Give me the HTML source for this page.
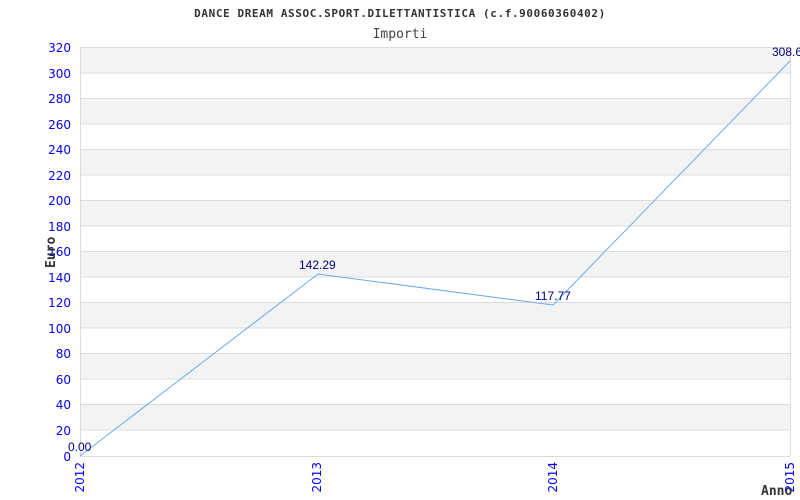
<!DOCTYPE html>
<html><head><meta charset="utf-8"><style>
html,body{margin:0;padding:0;background:#fff;}
svg{display:block;}
.y{font-family:"DejaVu Sans","Liberation Sans",sans-serif;font-size:12px;fill:#0000ff;text-anchor:end;}
.v{font-family:"Liberation Sans",sans-serif;font-size:12px;fill:#000080;}
.m{font-family:"DejaVu Sans Mono","Liberation Mono",monospace;}
</style></head><body>
<svg width="800" height="500" xmlns="http://www.w3.org/2000/svg">
<rect width="800" height="500" fill="#fff"/>
<text x="400" y="17" class="m" font-size="11" font-weight="bold" fill="#333" text-anchor="middle" letter-spacing="0.6">DANCE DREAM ASSOC.SPORT.DILETTANTISTICA (c.f.90060360402)</text>
<text x="400" y="38" class="m" font-size="13" fill="#444" text-anchor="middle">Importi</text>
<g fill="#f3f3f3">
<rect x="80" y="47" width="710" height="25.56"/>
<rect x="80" y="98.1" width="710" height="25.56"/>
<rect x="80" y="149.2" width="710" height="25.56"/>
<rect x="80" y="200.4" width="710" height="25.56"/>
<rect x="80" y="251.5" width="710" height="25.56"/>
<rect x="80" y="302.6" width="710" height="25.56"/>
<rect x="80" y="353.8" width="710" height="25.56"/>
<rect x="80" y="404.9" width="710" height="25.56"/>
</g>
<g stroke="#dcdcdc" stroke-width="1">
<line x1="80" y1="47.5" x2="790" y2="47.5"/>
<line x1="80" y1="73" x2="790" y2="73"/>
<line x1="80" y1="98.5" x2="790" y2="98.5"/>
<line x1="80" y1="124" x2="790" y2="124"/>
<line x1="80" y1="149.5" x2="790" y2="149.5"/>
<line x1="80" y1="175" x2="790" y2="175"/>
<line x1="80" y1="200.5" x2="790" y2="200.5"/>
<line x1="80" y1="226" x2="790" y2="226"/>
<line x1="80" y1="251.5" x2="790" y2="251.5"/>
<line x1="80" y1="277" x2="790" y2="277"/>
<line x1="80" y1="302.5" x2="790" y2="302.5"/>
<line x1="80" y1="328" x2="790" y2="328"/>
<line x1="80" y1="353.5" x2="790" y2="353.5"/>
<line x1="80" y1="379" x2="790" y2="379"/>
<line x1="80" y1="404.5" x2="790" y2="404.5"/>
<line x1="80" y1="430" x2="790" y2="430"/>
<line x1="80" y1="456.5" x2="790" y2="456.5"/>
<line x1="80.5" y1="47" x2="80.5" y2="457"/>
<line x1="790.5" y1="47" x2="790.5" y2="457"/>
</g>
<g class="y">
<text x="71" y="52">320</text><text x="71" y="78">300</text><text x="71" y="103">280</text><text x="71" y="129">260</text>
<text x="71" y="154">240</text><text x="71" y="180">220</text><text x="71" y="205">200</text><text x="71" y="231">180</text>
<text x="71" y="256">160</text><text x="71" y="282">140</text><text x="71" y="307">120</text><text x="71" y="333">100</text>
<text x="71" y="358">80</text><text x="71" y="384">60</text><text x="71" y="409">40</text><text x="71" y="435">20</text>
<text x="71" y="461">0</text>
</g>
<text transform="translate(55,268) rotate(-90)" class="m" font-size="13" font-weight="bold" fill="#333">Euro</text>
<text x="761" y="495" class="m" font-size="13" font-weight="bold" fill="#333">Anno</text>
<g class="y" style="text-anchor:end">
<text transform="translate(84,462) rotate(-90)">2012</text>
<text transform="translate(321,462) rotate(-90)">2013</text>
<text transform="translate(557,462) rotate(-90)">2014</text>
<text transform="translate(794,462) rotate(-90)">2015</text>
</g>
<polyline points="80,456 318,274 553,305 790,61" fill="none" stroke="#6aaaf0" stroke-width="1"/>
<text x="68" y="451" class="v">0.00</text>
<text x="299" y="269" class="v">142.29</text>
<text x="535" y="300" class="v">117.77</text>
<text x="772" y="56" class="v">308.6</text>
</svg>
</body></html>
